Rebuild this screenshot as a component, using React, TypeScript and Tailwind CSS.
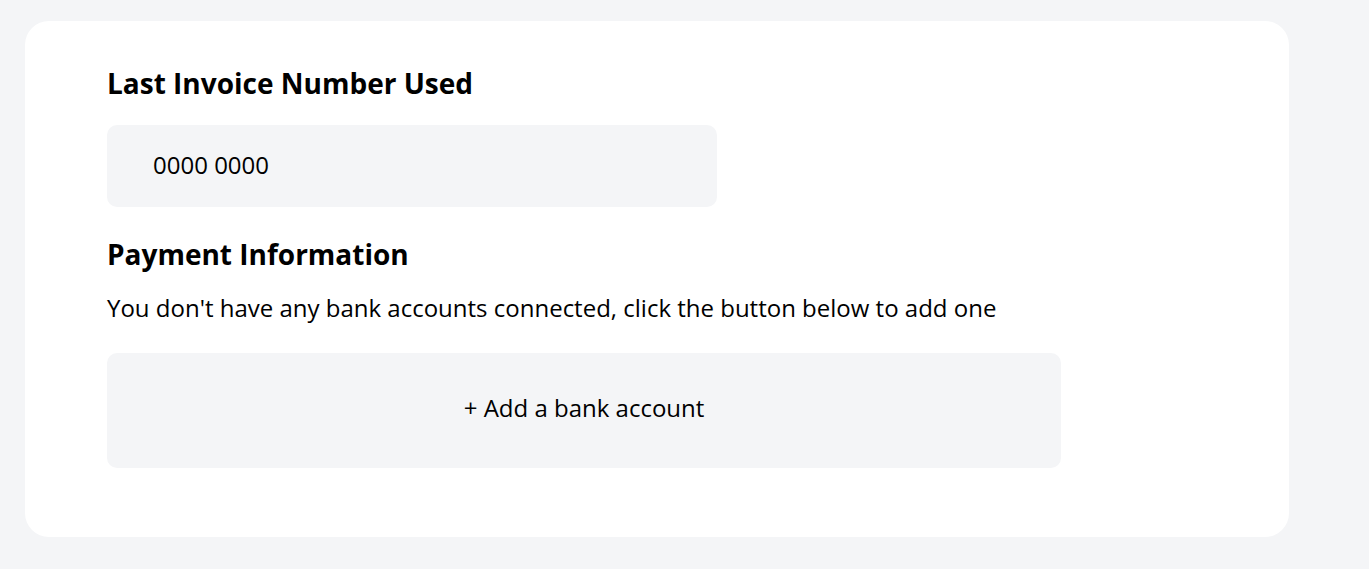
export default function App() {
  return (
    <div
      className="min-h-[569px] bg-[#f4f5f7] pt-[21px] pl-[25px] pr-[80px] pb-8"
      style={{ fontFamily: '"Open Sans", "Noto Sans", sans-serif' }}
    >
      <div className="w-[1264px] h-[516px] rounded-[24px] bg-white pl-[82px] pt-[45px] text-black">
        <h2 className="text-[28px] font-bold leading-[34px]">Last Invoice Number Used</h2>
        <div className="mt-[25px] flex h-[82px] w-[610px] items-center rounded-[10px] bg-[#f4f5f7] pl-[46px] pb-[3px] text-[24px]">
          0000 0000
        </div>
        <h2 className="mt-[30px] text-[28px] font-bold leading-[34px]">Payment Information</h2>
        <p className="mt-[21px] text-[24px] leading-[32px]">
          You don't have any bank accounts connected, click the button below to add one
        </p>
        <button
          type="button"
          className="mt-[29px] flex h-[115px] w-[954px] items-center justify-center rounded-[10px] bg-[#f4f5f7] pb-[5px] text-[24px]"
        >
          + Add a bank account
        </button>
      </div>
    </div>
  );
}
